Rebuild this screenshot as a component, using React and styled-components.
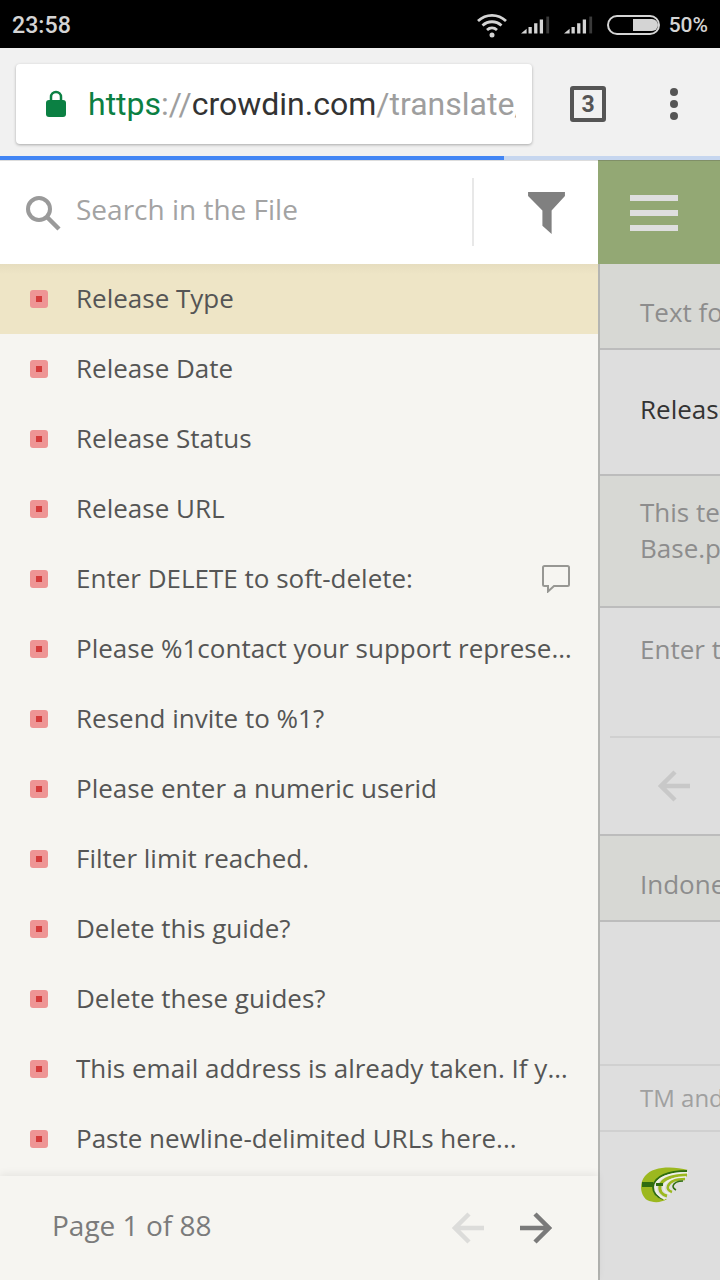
import React from "react";
import styled, { createGlobalStyle } from "styled-components";

const Global = createGlobalStyle`
  html, body { margin: 0; padding: 0; background: #dedede; }
  * { box-sizing: border-box; }
`;
const Page = styled.div`
  width: 720px; height: 1280px; overflow: hidden; display: flex; flex-direction: column;
  font-family: "Open Sans", sans-serif;
`;
const StatusBar = styled.div`
  height: 48px; flex: none; background: #000; color: #d4d4d4; display: flex; align-items: center;
  justify-content: space-between; padding: 1px 12px 0 12px; font-family: Roboto, sans-serif; font-weight: 500;
`;
const Clock = styled.span`font-size: 23.200px;`;
const StatusRight = styled.div`display: flex; align-items: center;`;
const Percent = styled.span`font-size: 21px; margin-left: 8px;`;
const Toolbar = styled.div`
  height: 108px; flex: none; background: #f1f1f1; display: flex; align-items: flex-start; padding: 16px 0 0 16px;
`;
const UrlBox = styled.div`
  width: 516px; height: 80px; background: #fff; border-radius: 4px; box-shadow: 0 1px 3px rgba(0,0,0,.3);
  display: flex; align-items: center; padding: 0 16px 0 30px;
`;
const Url = styled.div`
  margin-left: 22px; font-family: Roboto, sans-serif; font-size: 32px; white-space: nowrap; overflow: hidden;
  flex: 1; line-height: 80px;
`;
const Seg = styled.span`color: ${p => p.$c};`;
const TabCount = styled.div`
  width: 36px; height: 36px; margin: 22px 0 0 38px; border: 4px solid #555; border-radius: 3px; color: #555;
  display: flex; align-items: center; justify-content: center; font-family: Roboto, sans-serif; font-weight: 700; font-size: 23px;
`;
const Kebab = styled.div`
  margin: 24px 0 0 64px; display: flex; flex-direction: column; gap: 4px;
`;
const Dot = styled.i`display: block; width: 8px; height: 8px; border-radius: 50%; background: #555;`;
const Progress = styled.div`height: 4px; flex: none; background: #c6d6ef;`;
const ProgressFill = styled.div`height: 100%; background: #4285f4;`;
const Main = styled.div`flex: 1; display: flex; min-height: 0;`;
const Side = styled.div`
  width: 598px; flex: none; background: #f6f5f1; display: flex; flex-direction: column;
`;
const Search = styled.div`
  height: 104px; flex: none; background: #fff; display: flex; align-items: center; padding: 0 0 0 25px;
  border-top: 1px solid #ddd;
`;
const Placeholder = styled.span`margin-left: 15px; font-size: 28px; color: #a3a3a3; flex: 1; padding-bottom: 7px;`;
const VRule = styled.div`width: 2px; height: 68px; background: #e8e8e8; margin-bottom: 2px;`;
const FilterBtn = styled.div`width: 124px; display: flex; justify-content: center; padding-left: 20px;`;
const List = styled.div`flex: 1; min-height: 0; overflow: hidden;`;
const Row = styled.div`
  height: 70px; display: flex; align-items: center; padding: 0 24px 0 30px;
  background: ${p => (p.$active ? "#eee5c6" : "transparent")};
  ${p => p.$active && "background-image: linear-gradient(#e6ddbf, #eee5c6 10px);"}
`;
const Badge = styled.span`
  width: 18px; height: 18px; flex: none; border-radius: 3px; background: #ee9595; display: flex; align-items: center; justify-content: center;
  &::after { content: ""; width: 6px; height: 6px; background: #d33b3b; }
`;
const RowText = styled.span`
  margin-left: 28px; font-size: 26px; color: #555; white-space: nowrap; overflow: hidden; text-overflow: ellipsis; flex: 1;
  line-height: 36px; padding-bottom: 2px;
`;
const CommentIcon = styled.svg`width: 28px; height: 28px; flex: none; margin-right: 4px; fill: none; stroke: #979793; stroke-width: 2;`;
const Footer = styled.div`
  height: 104px; flex: none; display: flex; align-items: center; padding: 0 46px 0 52px; background: #f6f5f1;
  box-shadow: 0 -2px 8px rgba(0,0,0,.07); position: relative;
`;
const PageText = styled.span`font-size: 28px; color: #7b7b7b; flex: 1; padding-bottom: 6px;`;
const Pager = styled.div`display: flex; gap: 36px;`;
const Right = styled.div`flex: 1; min-width: 0; overflow: hidden; display: flex; flex-direction: column;`;
const GreenBar = styled.div`
  height: 104px; flex: none; background: #93a874; display: flex; flex-direction: column; justify-content: center;
  gap: 9px; padding: 0 0 0 32px; border-top: 1px solid #808f68;
`;
const Burger = styled.i`display: block; width: 48px; height: 6px; background: #dedede;`;
const RightBody = styled.div`flex: 1; min-height: 0; display: flex; flex-direction: column; border-left: 2px solid #b4b5b2; background: #dedede;`;
const Section = styled.div`
  height: ${p => p.$h}px; flex: none; padding: ${p => p.$pt || 0}px 0 0 40px; background: ${p => (p.$dark ? "#d7d8d4" : "#dedede")};
  border-bottom: ${p => (p.$noline ? "none" : `2px solid ${p.$line || "#bcbcbc"}`)}; color: ${p => p.$c || "#8d8d8d"};
  font-size: ${p => p.$fs || 26}px; white-space: nowrap; line-height: 36px; overflow: hidden;
`;
const Divider = styled.div`height: 2px; flex: none; margin-left: 10px; background: #d0d0d0;`;
const ArrowZone = styled.div`
  height: 98px; flex: none; border-bottom: 2px solid #bcbcbc; display: flex; align-items: center; padding-left: 58px;
`;
const LogoZone = styled.div`flex: 1; padding: 35px 0 0 41px;`;

const Signal = ({ gap }) => (
  <svg width="30" height="20" viewBox="0 0 32 20" style={{ marginLeft: gap }}>
    <path d="M0 19l6-5v5z M8 12h3.500v7H8z M14 8h3.500v11H14z M20 4h3.500v15H20z" fill="#d4d4d4" />
    <path d="M27 1h3v18h-3z" fill="#3a3a3a" />
  </svg>
);
const Arrow = ({ dir, color }) => (
  <svg width="32" height="32" viewBox="0 0 32 32" fill="none" stroke={color} strokeWidth="4.500" style={dir === "left" ? { transform: "scaleX(-1)" } : undefined}>
    <path d="M0 16h29 M15 2l14 14-14 14" />
  </svg>
);

const rows = [
  "Release Type", "Release Date", "Release Status", "Release URL", "Enter DELETE to soft-delete:",
  "Please %1contact your support representative", "Resend invite to %1?", "Please enter a numeric userid",
  "Filter limit reached.", "Delete this guide?", "Delete these guides?",
  "This email address is already taken. If you", "Paste newline-delimited URLs here...",
];

export default function App() {
  return (
    <Page>
      <Global />
      <StatusBar>
        <Clock>23:58</Clock>
        <StatusRight>
          <svg width="32" height="26" viewBox="0 0 32 26" fill="none" stroke="#d4d4d4" strokeWidth="2.800">
            <path d="M2 9c8-7.500 20-7.500 28 0 M6.500 13.500c5.500-5 13.500-5 19 0 M11 18c3-2.800 7-2.800 10 0" />
            <circle cx="16" cy="23" r="2.500" fill="#d4d4d4" stroke="none" />
          </svg>
          <Signal gap={13} />
          <Signal gap={13} />
          <svg width="54" height="20" viewBox="0 0 54 20" style={{ marginLeft: 13 }}>
            <rect x="1" y="1" width="51" height="18" rx="9" fill="none" stroke="#d4d4d4" strokeWidth="2" />
            <path d="M26 4h19a6 6 0 0 1 0 12H26z" fill="#d4d4d4" />
          </svg>
          <Percent>50%</Percent>
        </StatusRight>
      </StatusBar>
      <Toolbar>
        <UrlBox>
          <svg width="20" height="28" viewBox="0 0 20 28">
            <path d="M5 12V7a5 5 0 0 1 10 0v5" fill="none" stroke="#0b8043" strokeWidth="2.500" />
            <rect x="0" y="10" width="20" height="17" rx="3" fill="#0b8043" />
          </svg>
          <Url>
            <Seg $c="#0b8043">https</Seg><Seg $c="#9e9e9e">://</Seg><Seg $c="#333">crowdin.com</Seg><Seg $c="#9e9e9e">/translate/</Seg>
          </Url>
        </UrlBox>
        <TabCount>3</TabCount>
        <Kebab><Dot /><Dot /><Dot /></Kebab>
      </Toolbar>
      <Progress><ProgressFill style={{ width: 504 }} /></Progress>
      <Main>
        <Side>
          <Search>
            <svg width="36" height="36" viewBox="0 0 36 36" fill="none" stroke="#9a9a9a">
              <circle cx="14" cy="14" r="11" strokeWidth="4" />
              <path d="M22 22l12 12" strokeWidth="4.500" />
            </svg>
            <Placeholder>Search in the File</Placeholder>
            <VRule />
            <FilterBtn>
              <svg width="37" height="42" viewBox="0 0 36 41">
                <path d="M0 0h36v4L23 18v23l-9-8V18L0 4z" fill="#808080" />
              </svg>
            </FilterBtn>
          </Search>
          <List>
            {rows.map((t, i) => (
              <Row key={t} $active={i === 0}>
                <Badge />
                <RowText>{t}</RowText>
                {i === 4 && (
                  <CommentIcon viewBox="0 0 28 28">
                    <path d="M2.500 1h23a1.500 1.500 0 0 1 1.500 1.500v17a1.500 1.500 0 0 1-1.500 1.500H12l-6 5.500V21H2.500A1.500 1.500 0 0 1 1 19.500v-17A1.500 1.500 0 0 1 2.500 1z" />
                  </CommentIcon>
                )}
              </Row>
            ))}
          </List>
          <Footer>
            <PageText>Page 1 of 88</PageText>
            <Pager>
              <Arrow dir="left" color="#dcdcda" />
              <Arrow dir="right" color="#7a7a7a" />
            </Pager>
          </Footer>
        </Side>
        <Right>
          <GreenBar><Burger /><Burger /><Burger /></GreenBar>
          <RightBody>
            <Section $dark $h={86} $pt={30}>Text for translation</Section>
            <Section $h={126} $pt={41} $c="#333">Release Type</Section>
            <Section $dark $h={132} $pt={18}>This text is used in<br />Base.php</Section>
            <Section $h={128} $pt={23} $noline>Enter translation here</Section>
            <Divider />
            <ArrowZone><Arrow dir="left" color="#c8c8c8" /></ArrowZone>
            <Section $dark $h={86} $pt={30}>Indonesian</Section>
            <Section $h={144} $line="#d0d0d0" />
            <Section $h={66} $pt={14} $fs={24} $line="#d0d0d0" $c="#a0a0a0">TM and MT suggestions</Section>
            <LogoZone>
              <svg width="48" height="36" viewBox="0 0 48 36" fill="none">
                <path d="M47 3C32-1 12-1 4 9c-6 7-5 19 2 24 6 3 14 3 20-1-8 1-13-3-14-10C11 13 24 6 47 3z" fill="#9cb81f" />
                <path d="M46 4C28 4 13 9 12 20c0 6 4 10 10 12" stroke="#2f6d10" strokeWidth="1.800" />
                <path d="M47 6C32 6 17 9 15 19c-1 6 3 11 9 13" stroke="#f0f0e8" strokeWidth="1.800" />
                <path d="M46 8C34 8 21 11 19 19c-1 5 2 9 7 10" stroke="#9cb81f" strokeWidth="3" />
                <path d="M45 10C35 10 25 13 23 19c-1 4 2 7 6 8" stroke="#f0f0e8" strokeWidth="1.500" />
                <path d="M44 12c-8 0-15 2-17 7-1 3 1 5 4 6" stroke="#9cb81f" strokeWidth="2.500" />
                <path d="M42 14c-6 0-9 2-10 5 0 2 1 3 3 4" stroke="#2f6d10" strokeWidth="1.500" />
                <path d="M1 15h11v5H1z M15 16h7v3h-7z" fill="#2f6d10" />
              </svg>
            </LogoZone>
          </RightBody>
        </Right>
      </Main>
    </Page>
  );
}
